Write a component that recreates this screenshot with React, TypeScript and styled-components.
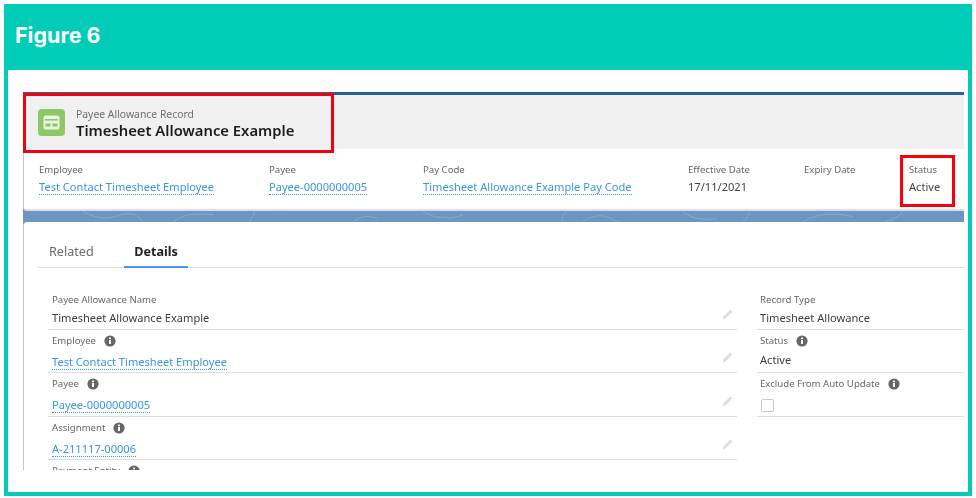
import React from "react";
import styled, { createGlobalStyle } from "styled-components";

const Global = createGlobalStyle`
  html, body { margin: 0; padding: 0; background: #fff; }
  body { width: 976px; height: 498px; overflow: hidden; font-family: "Noto Sans", "Open Sans", sans-serif; }
`;
const Frame = styled.div`
  position: relative; box-sizing: border-box; width: 968px; height: 492px; margin: 4px 4px 2px;
  border: 4px solid #00ccb8; border-top: 0; background: #fff; display: flex; flex-direction: column;
`;
const TitleBar = styled.header`
  height: 66px; flex: none; background: #00ccb8; display: flex; align-items: flex-start; padding: 18px 0 0 7px; box-sizing: border-box;
`;
const FigureTitle = styled.h1`
  margin: 0; color: #fff; font: 700 21.5px/26px Inter, "Liberation Sans", sans-serif;
`;
const Body = styled.main`
  flex: 1; padding: 22px 4px 0 15px; min-height: 0;
`;
const Page = styled.div`
  height: 378px; overflow: hidden; background: #6b96c2; display: flex; flex-direction: column; filter: blur(0.4px);
`;
const Stripe = styled.div` height: 3px; flex: none; background: #2a5f9c; `;
const RecordHeader = styled.div`
  height: 54px; flex: none; background: #f0f0f0; border-left: 1px solid #b9c4d4; display: flex; align-items: center; padding: 0 0 0 14px; gap: 11px;
`;
const Tile = styled.div`
  width: 27px; height: 27px; border-radius: 4px; background: #8cc866; display: flex; align-items: center; justify-content: center;
`;
const HeaderText = styled.div` display: flex; flex-direction: column; `;
const Kicker = styled.span` font-size: 10.4px; line-height: 15px; color: #6f6f6f; `;
const RecordName = styled.span` font-size: 14.8px; line-height: 16px; font-weight: 600; color: #1c1c1c; `;
const Highlights = styled.div`
  height: 62px; flex: none; box-sizing: border-box; background: #fff; display: flex; padding: 14px 0 0 15px; border-left: 1px solid #b9c4d4; border-bottom: 2px solid #dedede; border-radius: 0 0 0 4px;
`;
const HighlightItem = styled.div<{ $w: number }>` width: ${(p) => p.$w}px; flex: none; display: flex; flex-direction: column; align-items: flex-start; `;
const Label = styled.span` font-size: 9.6px; line-height: 14px; color: #666; `;
const HighlightLabel = styled(Label)` margin-bottom: 2px; `;
const Value = styled.span` font-size: 11.1px; line-height: 16px; color: #444; `;
const RecordLink = styled.a`
  font-size: 11.1px; line-height: 15px; color: #3a94e0; border-bottom: 1px dotted #3a94e0; text-decoration: none;
`;
const Band = styled.svg` height: 11px; width: 100%; flex: none; display: block; `;
const DetailCard = styled.section`
  flex: 1; background: #fff; border-left: 1px solid #b9c4d4; border-radius: 4px 0 0 0; padding: 19px 0 0 14px;
`;
const Tabs = styled.nav`
  height: 26px; display: flex; border-bottom: 1px solid #dcdcdc; box-sizing: content-box;
`;
const Tab = styled.div<{ $active?: boolean; $w: number }>`
  width: ${(p) => p.$w}px; box-sizing: border-box; height: 27px; text-align: ${(p) => (p.$active ? "center" : "left")}; padding-left: ${(p) => (p.$active ? 0 : 11)}px;
  font-size: 12.6px; line-height: 21px; font-weight: ${(p) => (p.$active ? 700 : 400)}; color: ${(p) => (p.$active ? "#222" : "#6b6b6b")};
  border-bottom: ${(p) => (p.$active ? "2px solid #4a96ee" : "0")};
`;
const Columns = styled.div` display: flex; gap: 20px; padding: 25px 0 0 10px; `;
const Column = styled.div<{ $w: number; $inset: number }>` width: ${(p) => p.$w}px; flex: none; --inset: ${(p) => p.$inset}px; `;
const Field = styled.div<{ $h: number; $first: boolean }>`
  position: relative; height: ${(p) => p.$h}px; box-sizing: border-box; border-bottom: 1px solid #dedede; padding: ${(p) => (p.$first ? 0 : 4)}px 0 0 var(--inset); display: flex; flex-direction: column; align-items: flex-start;
`;
const FieldLabel = styled.div<{ $gap: number }>`
  display: flex; align-items: center; gap: 8px; font-size: 9.6px; line-height: 14px; color: #666; margin-bottom: ${(p) => p.$gap}px;
`;
const FieldValue = styled.span` font-size: 11.1px; line-height: 16px; color: #3c3c3c; `;
const Edit = styled.svg` position: absolute; right: 3px; bottom: 8px; width: 13px; height: 13px; `;
const CheckBox = styled.span` width: 13px; height: 13px; margin: 1px 0 0 1px; border: 1px solid #c9c9c9; border-radius: 2px; background: #fff; box-sizing: border-box; `;
const Highlight = styled.div<{ $x: number; $y: number; $w: number; $h: number }>`
  position: absolute; left: ${(p) => p.$x}px; top: ${(p) => p.$y}px; width: ${(p) => p.$w}px; height: ${(p) => p.$h}px; box-sizing: border-box; border: 3px solid #f5000c;
`;

const InfoIcon = () => (
  <svg width="12" height="12" viewBox="0 0 12 12" aria-hidden="true">
    <circle cx="6" cy="6" r="5.6" fill="#666" />
    <rect x="5" y="5" width="2" height="4" fill="#fff" />
    <rect x="5" y="2.6" width="2" height="1.6" fill="#fff" />
  </svg>
);
const Pencil = () => (
  <Edit viewBox="0 0 13 13" aria-hidden="true">
    <path d="M9.4 1.6l2 2-7 7-2.8.8.8-2.8z" fill="#dcdcdc" />
  </Edit>
);
const Card = () => (
  <svg width="17" height="15" viewBox="0 0 17 15" aria-hidden="true">
    <rect x="0.5" y="0.5" width="16" height="14" rx="2" fill="#e9f5df" />
    <rect x="2" y="4" width="13" height="1.6" fill="#8cc866" />
    <rect x="2.5" y="8.5" width="5" height="3" fill="#8cc866" />
    <rect x="9.5" y="8.5" width="5" height="3" fill="#8cc866" />
  </svg>
);

type F = { label: string; value: string; link?: boolean; info?: boolean; h: number; gap: number; check?: boolean; edit?: boolean };
const left: F[] = [
  { label: "Payee Allowance Name", value: "Timesheet Allowance Example", h: 37, gap: 3, edit: true },
  { label: "Employee", value: "Test Contact Timesheet Employee", link: true, info: true, h: 43, gap: 6, edit: true },
  { label: "Payee", value: "Payee-0000000005", link: true, info: true, h: 44, gap: 6, edit: true },
  { label: "Assignment", value: "A-211117-00006", link: true, info: true, h: 43, gap: 6, edit: true },
  { label: "Payment Entity", value: "", info: true, h: 43, gap: 6 },
];
const right: F[] = [
  { label: "Record Type", value: "Timesheet Allowance", h: 37, gap: 3 },
  { label: "Status", value: "Active", info: true, h: 43, gap: 4 },
  { label: "Exclude From Auto Update", value: "", info: true, check: true, h: 44, gap: 7 },
];
const Fields = ({ items }: { items: F[] }) => (
  <>
    {items.map((f, i) => (
      <Field key={f.label} $h={f.h} $first={i === 0}>
        <FieldLabel $gap={f.gap}>
          {f.label}
          {f.info && <InfoIcon />}
        </FieldLabel>
        {f.check ? <CheckBox /> : f.link ? <RecordLink href="#">{f.value}</RecordLink> : <FieldValue>{f.value}</FieldValue>}
        {f.edit && <Pencil />}
      </Field>
    ))}
  </>
);

export default function App() {
  return (
    <>
      <Global />
      <Frame>
        <TitleBar>
          <FigureTitle>Figure 6</FigureTitle>
        </TitleBar>
        <Body>
          <Page>
            <Stripe />
            <RecordHeader>
              <Tile><Card /></Tile>
              <HeaderText>
                <Kicker>Payee Allowance Record</Kicker>
                <RecordName>Timesheet Allowance Example</RecordName>
              </HeaderText>
            </RecordHeader>
            <Highlights>
              <HighlightItem $w={230}><HighlightLabel>Employee</HighlightLabel><RecordLink href="#">Test Contact Timesheet Employee</RecordLink></HighlightItem>
              <HighlightItem $w={154}><HighlightLabel>Payee</HighlightLabel><RecordLink href="#">Payee-0000000005</RecordLink></HighlightItem>
              <HighlightItem $w={265}><HighlightLabel>Pay Code</HighlightLabel><RecordLink href="#">Timesheet Allowance Example Pay Code</RecordLink></HighlightItem>
              <HighlightItem $w={116}><HighlightLabel>Effective Date</HighlightLabel><Value>17/11/2021</Value></HighlightItem>
              <HighlightItem $w={105}><HighlightLabel>Expiry Date</HighlightLabel></HighlightItem>
              <HighlightItem $w={50}><HighlightLabel>Status</HighlightLabel><Value>Active</Value></HighlightItem>
            </Highlights>
            <Band viewBox="0 0 941 12" preserveAspectRatio="none" aria-hidden="true">
              <g fill="none" stroke="#8fb0d2" strokeWidth="0.8">
                <path d="M60 0c8 6 20 10 32 6s20-6 28 6M150 12c8-8 22-10 40-8M226 12c4-6 6-10 5-12" />
                <path d="M330 12c6-6 14-8 24-4M400 0c8 8 30 10 40 4M540 12c-2-4 0-8 4-12M560 12c6-6 14-8 22-6s6 4 14 6" />
                <path d="M660 0c4 6 20 12 34 8M720 12c4-4 6-8 6-12M780 12c14-10 30-10 50-6M880 0c-4 6-10 10-18 12" />
              </g>
            </Band>
            <DetailCard>
              <Tabs>
                <Tab $w={86}>Related</Tab>
                <Tab $active $w={64}>Details</Tab>
              </Tabs>
              <Columns>
                <Column $w={689} $inset={4}><Fields items={left} /></Column>
                <Column $w={207} $inset={3}><Fields items={right} /></Column>
              </Columns>
            </DetailCard>
          </Page>
        </Body>
        <Highlight $x={15} $y={89} $w={311} $h={60} />
        <Highlight $x={892} $y={151} $w={55} $h={52} />
      </Frame>
    </>
  );
}
